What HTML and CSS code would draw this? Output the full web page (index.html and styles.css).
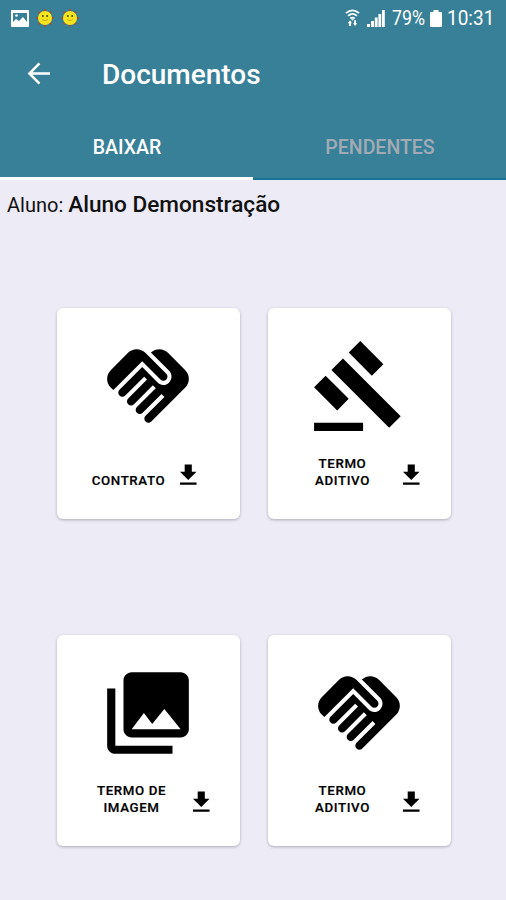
FILE: index.html
```html
<!DOCTYPE html>
<html lang="pt-BR">
<head>
<meta charset="utf-8">
<meta name="viewport" content="width=device-width, initial-scale=1">
<title>Documentos</title>
<link rel="stylesheet" href="styles.css">
</head>
<body>
<svg class="defs" width="0" height="0" aria-hidden="true">
  <symbol id="handshake" viewBox="0 0 24 24"><path d="M16.48 10.41c-.39.39-1.04.39-1.43 0l-4.47-4.46-7.05 7.04-.66-.63c-1.17-1.17-1.17-3.07 0-4.24l4.24-4.24c1.17-1.17 3.07-1.17 4.24 0L16.48 9c.39.39.39 1.02 0 1.41zM17.18 8.29c.78.78.78 2.05 0 2.83-1.27 1.27-2.61.22-2.83 0l-3.76-3.76-5.57 5.57c-.39.39-.39 1.02 0 1.41s1.02.39 1.42 0l4.62-4.62.71.71-4.62 4.62c-.39.39-.39 1.02 0 1.41s1.02.39 1.42 0l4.62-4.62.71.71-4.62 4.62c-.39.39-.39 1.02 0 1.41s1.02.39 1.41 0l4.62-4.62.71.71-4.62 4.62c-.39.39-.39 1.02 0 1.41s1.02.39 1.41 0l8.32-8.34c1.17-1.17 1.17-3.07 0-4.24l-4.24-4.24c-1.15-1.15-3.01-1.17-4.18-.06l4.47 4.47z"/></symbol>
  <symbol id="gavel" viewBox="0 0 24 24"><path d="M1 21h12v2H1zM5.245 8.07l2.83-2.827 14.14 14.142-2.828 2.828zM12.317 1l5.657 5.656-2.83 2.83-5.654-5.66zM3.825 9.485l5.657 5.657-2.828 2.828-5.657-5.657z"/></symbol>
  <symbol id="gallery" viewBox="0 0 24 24"><path d="M22 16V4c0-1.1-.9-2-2-2H8c-1.1 0-2 .9-2 2v12c0 1.1.9 2 2 2h12c1.1 0 2-.9 2-2zM8 16l3-4 2.03 2.71L16 11l4 5zM2 6v14c0 1.1.9 2 2 2h14v-2H4V6H2z"/></symbol>
  <symbol id="download" viewBox="0 0 24 24"><path d="M19 9h-4V3H9v6H5l7 7 7-7zM5 18v2h14v-2H5z"/></symbol>
  <symbol id="sun" viewBox="0 0 18 18">
    <g fill="#9c4f3c"><circle cx="9" cy="1.200" r="1.200"/><circle cx="14.500" cy="3.500" r="1.300"/><circle cx="16.800" cy="9" r="1.200"/><circle cx="14.500" cy="14.500" r="1.300"/><circle cx="9" cy="16.800" r="1.200"/><circle cx="3.500" cy="14.500" r="1.300"/><circle cx="1.200" cy="9" r="1.200"/><circle cx="3.500" cy="3.500" r="1.300"/></g>
    <circle cx="9" cy="9" r="7" fill="#f5e51c"/>
    <circle cx="6.800" cy="6.900" r="1" fill="#4c4210"/><circle cx="11.200" cy="6.900" r="1" fill="#4c4210"/>
    <path d="M6 10.500q3 2.400 6 0" fill="none" stroke="#c49a18" stroke-width=".8"/>
  </symbol>
</svg>
<header class="app-header">
  <div class="status-bar">
    <div class="notices">
      <svg class="picture" viewBox="0 0 18 17"><path fill="#fff" fill-rule="evenodd" d="M1 0h16q1 0 1 1v15q0 1-1 1H1q-1 0-1-1V1q0-1 1-1zm1 3v9l3-3 3 2 4-4 4 5V3z"/><circle cx="5.5" cy="5.5" r="1.3" fill="#fff"/></svg>
      <svg class="sun"><use href="#sun"/></svg>
      <svg class="sun"><use href="#sun"/></svg>
    </div>
    <div class="system">
      <svg class="wifi" viewBox="0 0 16 19" fill="none" stroke="#fff"><path stroke-width="1.8" d="M1 4.3q7-6 14 0M3.3 7.2q4.7-4 9.4 0M5.6 10q2.4-2 4.8 0"/><path fill="#fff" stroke="none" d="M6.3 10.2h3.4L8 12.5zM5.3 12l2.200 3H6.300v3h-2v-3H3zM10.700 18l2.300-3h-1.300v-3h-2v3H8.500z"/></svg>
      <svg class="signal" viewBox="0 0 18 17" fill="#fff"><path d="M0 14h3v3H0zM4 11h3v6H4zM7.800 7.500h2.800V17H7.800zM11.400 4h2.800v13h-2.800zM15 0h2.800v17H15z"/></svg>
      <span class="percent">79%</span>
      <svg class="battery" viewBox="0 0 12 17" fill="#fff"><path d="M3.500 0h5v2H11q1 0 1 1v13q0 1-1 1H1q-1 0-1-1V3q0-1 1-1h2.500z"/></svg>
      <span class="clock">10:31</span>
    </div>
  </div>
  <div class="toolbar">
    <svg class="back" viewBox="0 0 24 24" fill="none" stroke="#fff" stroke-width="2.6"><path d="M13 1.500 2.500 12 13 22.500M2.500 12H24"/></svg>
    <h1>Documentos</h1>
  </div>
  <nav class="tabs">
    <a class="tab active">BAIXAR</a>
    <a class="tab">PENDENTES</a>
  </nav>
</header>
<main>
  <p class="student">Aluno: <strong>Aluno Demonstração</strong></p>
  <div class="cards">
    <article class="card contract">
      <svg class="art"><use href="#handshake"/></svg>
      <div class="caption"><span class="label">CONTRATO</span><svg class="download"><use href="#download"/></svg></div>
    </article>
    <article class="card">
      <svg class="art"><use href="#gavel"/></svg>
      <div class="caption"><span class="label">TERMO<br>ADITIVO</span><svg class="download"><use href="#download"/></svg></div>
    </article>
    <article class="card">
      <svg class="art"><use href="#gallery"/></svg>
      <div class="caption"><span class="label">TERMO DE<br>IMAGEM</span><svg class="download"><use href="#download"/></svg></div>
    </article>
    <article class="card">
      <svg class="art"><use href="#handshake"/></svg>
      <div class="caption"><span class="label">TERMO<br>ADITIVO</span><svg class="download"><use href="#download"/></svg></div>
    </article>
  </div>
</main>
</body>
</html>
```
FILE: styles.css
```css
* { box-sizing: border-box; }
body { margin: 0; min-height: 900px; background: #edebf6; color: #111; font-family: Roboto, sans-serif; }
svg { display: block; flex: none; }
.defs { position: absolute; }
.app-header { height: 180px; background: #378097; color: #fff; }
.status-bar { display: flex; justify-content: space-between; height: 36px; padding: 0 12px 0 11px; }
.notices, .system { display: flex; align-items: center; }
.picture { width: 18px; height: 17px; margin-right: 7px; }
.sun { width: 18px; height: 18px; margin-right: 7px; }
.wifi { width: 15px; height: 18px; margin-right: 7px; }
.signal { width: 18px; height: 17px; margin-right: 7px; }
.percent, .clock { font-size: 20px; line-height: 36px; transform-origin: left; white-space: nowrap; }
.percent { width: 34px; transform: scaleX(.89); }
.battery { width: 12px; height: 17px; margin: 0 5px 0 4px; }
.clock { width: 47px; transform: scaleX(.95); }
.toolbar { display: flex; align-items: center; height: 78px; padding-left: 27px; }
.back { width: 23px; height: 23px; margin-right: 52px; margin-top: -4px; }
h1 { margin: 0; font-size: 28px; line-height: 36px; font-weight: 500; }
.tabs { display: flex; height: 66px; }
.tab { flex: 1; height: 66px; border-bottom: 2px solid #187694; text-align: center; font-size: 19.5px; line-height: 68px; font-weight: 500; color: #a2aab5; padding-left: 1px; }
.tab.active { color: #fff; border-bottom: 3px solid #fff; }
.student { margin: 0; height: 128px; padding: 8px 7px; font-size: 20px; line-height: 33px; white-space: nowrap; }
.student strong { font-size: 22.600px; font-weight: 500; }
.cards { display: grid; grid-template-columns: 183px 183px; grid-auto-rows: 211px; gap: 116px 28px; padding-left: 56.5px; }
.card { padding-top: 29px; background: #fff; border-radius: 6px; box-shadow: 0 1px 3px rgba(40, 35, 60, .32); }
.art { width: 98px; height: 98px; margin: 0 auto; }
.caption { display: flex; align-items: flex-start; height: 50px; margin-top: 21px; padding-left: 25px; }
.label { width: 100px; text-align: center; font-size: 13.300px; line-height: 16.5px; font-weight: 500; letter-spacing: .6px; color: #000; -webkit-text-stroke: .2px #000; }
.download { width: 28.5px; height: 28.5px; margin: 5px 0 0 5px; }
.card:nth-child(even) .download { margin-left: 4px; }
.contract .caption { padding-left: 22px; }
.contract .label { padding-top: 16.5px; }
.contract .download { margin-left: -5px; }
```
